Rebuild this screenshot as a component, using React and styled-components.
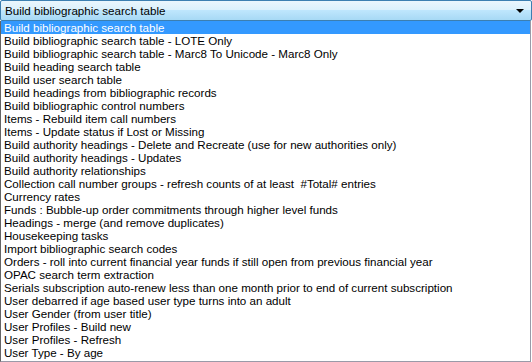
import React from "react";
import styled, { createGlobalStyle } from "styled-components";

const Global = createGlobalStyle`
  html, body { margin: 0; padding: 0; background: #ffffff; }
  body { font-family: "Liberation Sans", Tahoma, Arial, sans-serif; }
`;

const Wrap = styled.div`
  width: 532px;
  height: 362px;
  display: flex;
  flex-direction: column;
  overflow: hidden;
  background: #ffffff;
`;

const Combo = styled.div`
  box-sizing: border-box;
  height: 21px;
  width: 532px;
  border: 1px solid #3c7fb1;
  border-radius: 2px;
  background: linear-gradient(to bottom, #eaf6fd 0%, #d9f0fc 50%, #bee6fd 50%, #a7d9f5 100%);
  display: flex;
  align-items: center;
  padding: 0 6px 0 4px;
  font-size: 11.6px;
  color: #000;
`;

const ComboText = styled.span`
  flex: 1;
  white-space: nowrap;
`;

const Arrow = styled.span`
  width: 0;
  height: 0;
  border-left: 4px solid transparent;
  border-right: 4px solid transparent;
  border-top: 4px solid #000;
  margin-right: 1px;
  margin-top: 1px;
`;

const List = styled.ul`
  list-style: none;
  margin: 0;
  padding: 0;
  box-sizing: border-box;
  width: 531px;
  height: 341px;
  border: 1px solid #646464;
  border-top: none;
  border-right-color: #9a9aa8;
  border-bottom-color: #9a9aa8;
  background: #ffffff;
`;

const Item = styled.li`
  height: 13px;
  line-height: 13px;
  padding-left: 3px;
  font-size: 11.6px;
  white-space: nowrap;
  color: ${(p) => (p.$selected ? "#ffffff" : "#000000")};
  background: ${(p) => (p.$selected ? "#3399ff" : "transparent")};
`;

const items = [
  "Build bibliographic search table",
  "Build bibliographic search table - LOTE Only",
  "Build bibliographic search table - Marc8 To Unicode - Marc8 Only",
  "Build heading search table",
  "Build user search table",
  "Build headings from bibliographic records",
  "Build bibliographic control numbers",
  "Items - Rebuild item call numbers",
  "Items - Update status if Lost or Missing",
  "Build authority headings - Delete and Recreate (use for new authorities only)",
  "Build authority headings - Updates",
  "Build authority relationships",
  "Collection call number groups - refresh counts of at least\u00a0 #Total# entries",
  "Currency rates",
  "Funds : Bubble-up order commitments through higher level funds",
  "Headings - merge (and remove duplicates)",
  "Housekeeping tasks",
  "Import bibliographic search codes",
  "Orders - roll into current financial year funds if still open from previous financial year",
  "OPAC search term extraction",
  "Serials subscription auto-renew less than one month prior to end of current subscription",
  "User debarred if age based user type turns into an adult",
  "User Gender (from user title)",
  "User Profiles - Build new",
  "User Profiles - Refresh",
  "User Type - By age",
];

export default function App() {
  return (
    <>
      <Global />
      <Wrap>
        <Combo>
          <ComboText>Build bibliographic search table</ComboText>
          <Arrow />
        </Combo>
        <List>
          {items.map((t, i) => (
            <Item key={i} $selected={i === 0}>
              {t}
            </Item>
          ))}
        </List>
      </Wrap>
    </>
  );
}
